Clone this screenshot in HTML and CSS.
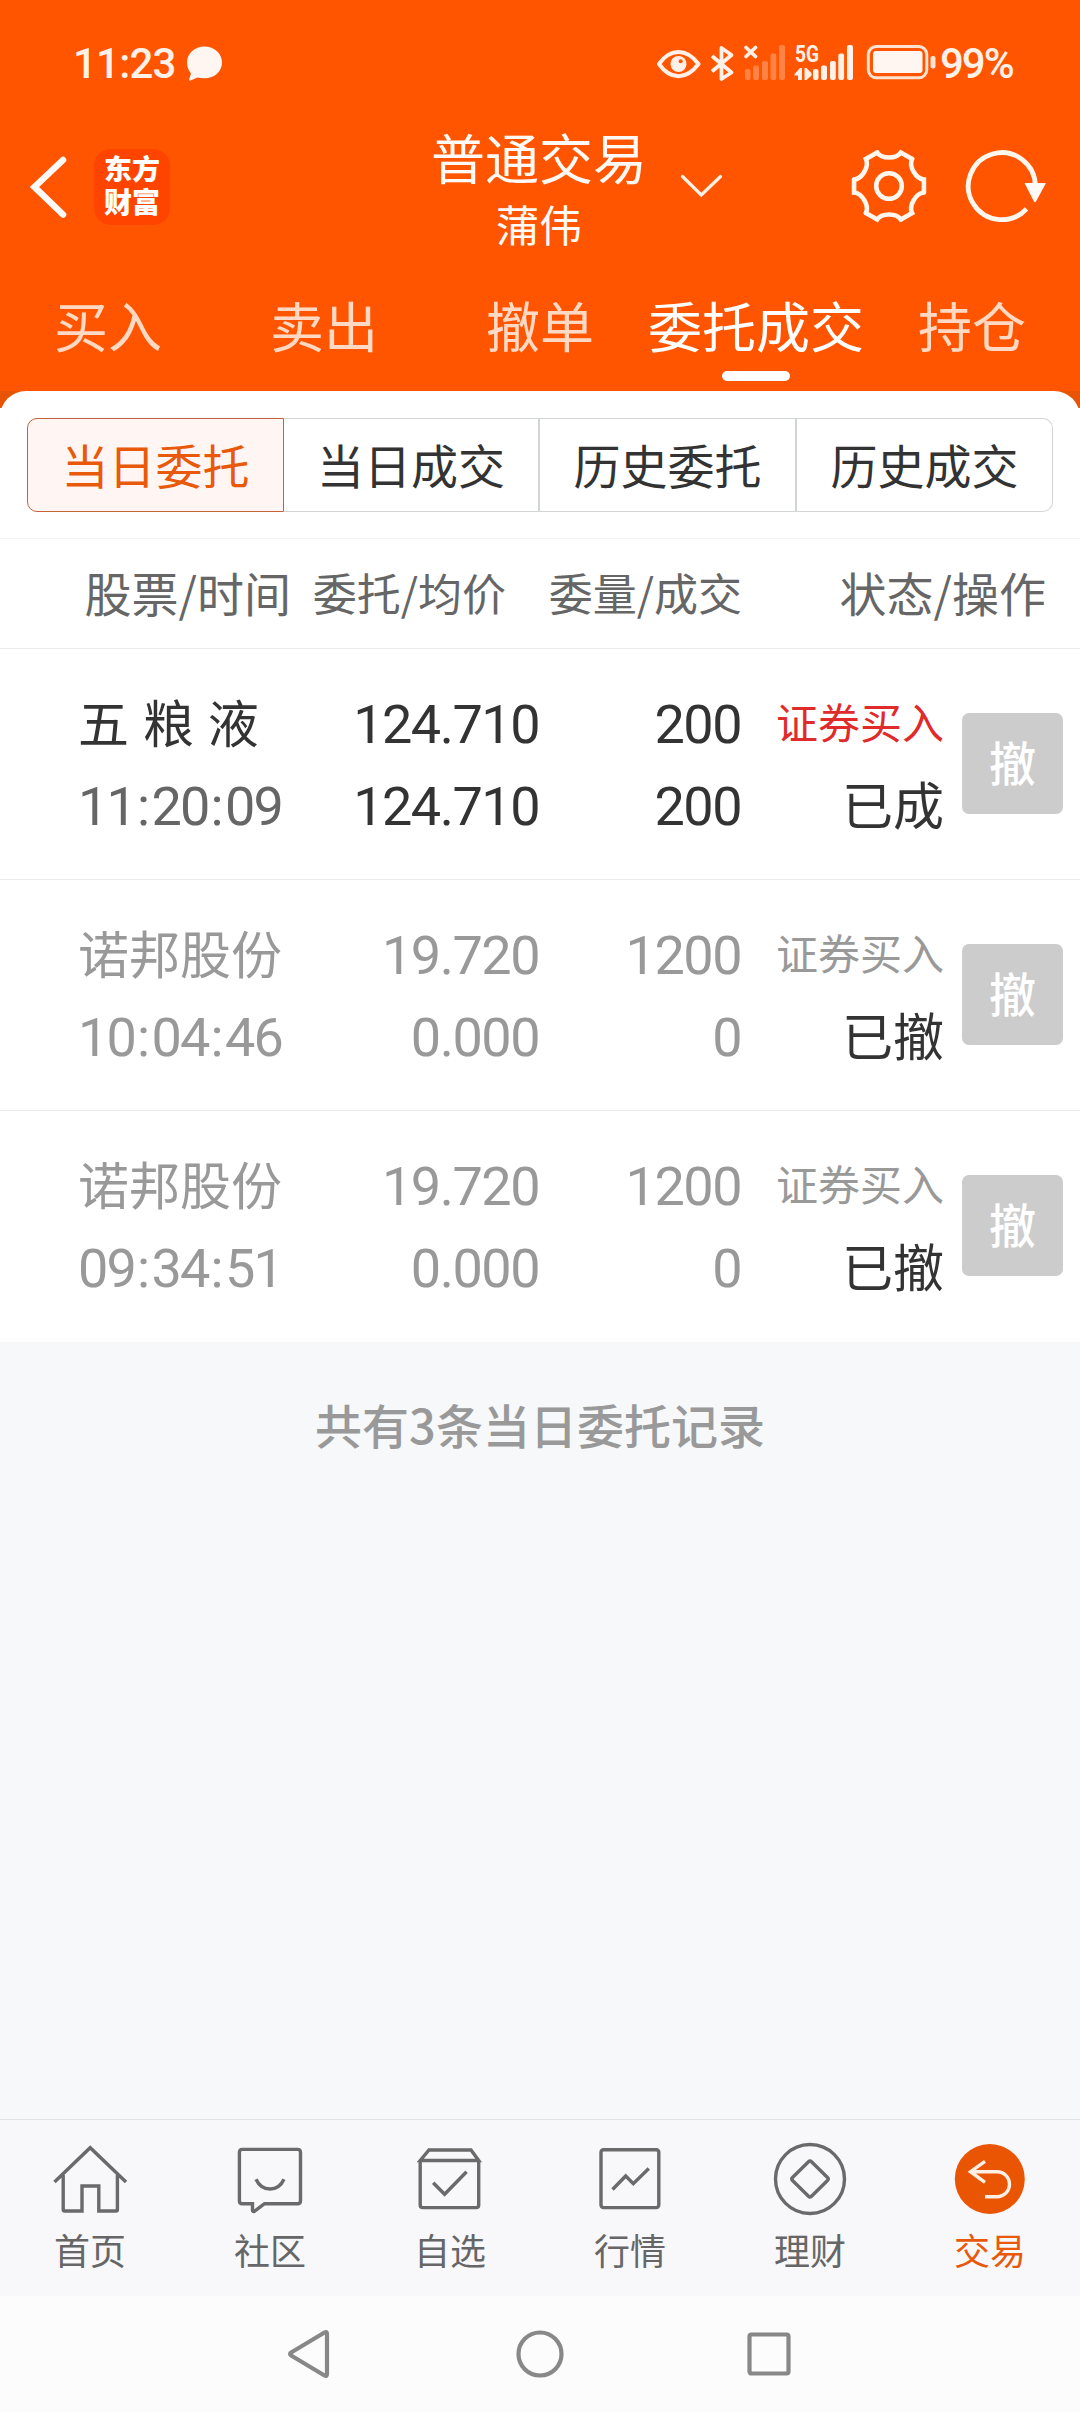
FILE: index.html
```html
<!DOCTYPE html>
<html lang="zh-CN">
<head>
<meta charset="utf-8">
<title>普通交易</title>
<link rel="stylesheet" href="styles.css">
</head>
<body>
<div class="app">
  <header class="header">
    <div class="status">
      <span class="clock">11:23</span>
      <svg class="bubble" width="36" height="44" viewBox="187 40 36 44"><path d="M204.500 46.500C214.500 46.500 222 53.500 222 62.500S214.500 78.300 204.500 78.300C201.500 78.300 199.500 77.800 197.500 77.500L190.500 80.600C189 80.800 188.800 80 189.200 79L191 73.500C188.500 70.500 187 66.500 187 62.500C187 53.500 194.500 46.500 204.500 46.500Z" fill="#fff6f2"/></svg>
      <svg class="s-eye" width="44" height="44" viewBox="657 40 44 44"><path d="M659 64C664.500 56 671 52 678.500 52S692.500 56 698.500 64C692.500 72 686 76.200 678.500 76.200S664.500 72 659 64Z" fill="none" stroke="#fff0e8" stroke-width="4" stroke-linejoin="round"/><circle cx="678.500" cy="64" r="8" fill="#fff0e8"/><circle cx="680.700" cy="61.300" r="2" fill="#f50"/></svg>
      <svg class="s-bt" width="26" height="44" viewBox="709 40 26 44"><path d="M712 56L731.500 72.500L721.500 79V48L731.500 55L712 71.500" fill="none" stroke="#fff0e8" stroke-width="3.800" stroke-linejoin="round"/></svg>
      <svg class="s-sim" width="42" height="44" viewBox="744 40 42 44"><path d="M746 47.500L755.500 56.500M755.500 47.500L746 56.500" stroke="#fff0e8" stroke-width="3.600" stroke-linecap="round"/><g fill="#ff8345"><rect x="745" y="69" width="5.500" height="11" rx="2"/><rect x="753" y="65.500" width="6" height="14.500" rx="2"/><rect x="762" y="61" width="6" height="19" rx="2"/><rect x="770.500" y="53.500" width="5.800" height="26.500" rx="2"/><rect x="779" y="45" width="6" height="35" rx="2"/></g></svg>
      <svg class="s-net" width="60" height="44" viewBox="794 40 60 44"><text class="net-label" x="795" y="62" textLength="24" lengthAdjust="spacingAndGlyphs">5G</text><g fill="#fff0e8"><path d="M794.500 74L800 68H802V80H798V75.500H794.500ZM804.500 68H806.500L811.500 73V75.500L806.500 80H804.500Z"/><rect x="813" y="69" width="5.500" height="11" rx="2"/><rect x="821" y="65.500" width="6" height="14.500" rx="2"/><rect x="830" y="61" width="5.800" height="19" rx="2"/><rect x="838.300" y="53.500" width="5.800" height="26.500" rx="2"/><rect x="847" y="45" width="6" height="35" rx="2"/></g></svg>
      <svg class="s-bat" width="70" height="44" viewBox="866 40 70 44"><rect x="868.300" y="46.500" width="58.500" height="31.300" rx="8" fill="none" stroke="#ffe2d0" stroke-width="3"/><rect x="873" y="51" width="49.500" height="22" rx="3" fill="#fff6f2"/><rect x="930.500" y="56" width="5" height="12.500" rx="2" fill="#ffe2d0"/></svg>
      <span class="percent">99%</span>
    </div>
    <div class="titlebar">
      <svg class="back" width="40" height="76" viewBox="28 149 40 76"><path d="M63 160L34.500 187L63 214.500" fill="none" stroke="#fffaf7" stroke-width="6.500" stroke-linecap="round"/></svg>
      <div class="logo">东方<br>财富</div>
      <div class="title"><div class="title-main">普通交易</div><div class="title-sub">蒲伟</div></div>
      <svg class="chevron" width="44" height="30" viewBox="680 171 44 30"><path d="M682.500 176.500L701.300 195L720.500 176.500" fill="none" stroke="#fff0e4" stroke-width="3.200" stroke-linecap="round"/></svg>
      <svg class="gear" width="80" height="80" viewBox="-40 -40 80 80"><defs><path id="cog" d="M-11.850 -33.500C-7.500 -26.800 7.500 -26.800 11.850 -33.500L23.100 -27"/></defs><g fill="none" stroke="#fff6ee" stroke-width="4.600" stroke-linecap="round"><use href="#cog"/><use href="#cog" transform="rotate(60)"/><use href="#cog" transform="rotate(120)"/><use href="#cog" transform="rotate(180)"/><use href="#cog" transform="rotate(240)"/><use href="#cog" transform="rotate(300)"/><circle r="12.800"/></g></svg>
      <svg class="refresh" width="84" height="80" viewBox="964 146 84 80"><path d="M1026.500 208.800A33.500 33.500 0 1 1 1035.300 186" fill="none" stroke="#fff6ee" stroke-width="4.800"/><path d="M1024.500 183H1046L1036 201.500Q1035 203 1034 201.500Z" fill="#fffaf7"/></svg>
    </div>
    <nav class="tabs">
      <span class="tab">买入</span><span class="tab">卖出</span><span class="tab">撤单</span><span class="tab tab-on">委托成交</span><span class="tab">持仓</span>
    </nav>
  </header>
  <div class="lip"><div class="lip-card"></div></div>
  <main class="main">
    <div class="segments">
      <span class="seg seg-on">当日委托</span><span class="seg">当日成交</span><span class="seg">历史委托</span><span class="seg">历史成交</span>
    </div>
    <div class="thead">
      <span class="th-wide">股票/时间</span><span>委托/均价</span><span>委量/成交</span><span class="th-wide">状态/操作</span>
    </div>
    <div class="row">
      <div class="who"><div class="name">五 粮 液</div><div class="time">11<i>:</i>20<i>:</i>09</div></div>
      <div class="num"><div>124.710</div><div>124.710</div></div>
      <div class="num"><div>200</div><div>200</div></div>
      <div class="state"><div class="side">证券买入</div><div class="result">已成</div></div>
      <div class="cancel">撤</div>
    </div>
    <div class="row row-off">
      <div class="who"><div class="name">诺邦股份</div><div class="time">10<i>:</i>04<i>:</i>46</div></div>
      <div class="num"><div>19.720</div><div>0.000</div></div>
      <div class="num"><div>1200</div><div>0</div></div>
      <div class="state"><div class="side">证券买入</div><div class="result">已撤</div></div>
      <div class="cancel">撤</div>
    </div>
    <div class="row row-off">
      <div class="who"><div class="name">诺邦股份</div><div class="time">09<i>:</i>34<i>:</i>51</div></div>
      <div class="num"><div>19.720</div><div>0.000</div></div>
      <div class="num"><div>1200</div><div>0</div></div>
      <div class="state"><div class="side">证券买入</div><div class="result">已撤</div></div>
      <div class="cancel">撤</div>
    </div>
  </main>
  <section class="summary">共有3条当日委托记录</section>
  <nav class="tabbar">
    <div class="item"><svg class="ico" viewBox="0 0 80 80"><path d="M4.500 42L40.200 7.700L76 42M13.200 35V69.500Q13.200 71 14.700 71H32V46H48.800V71H66Q67.400 71 67.400 69.500V35"/></svg><span>首页</span></div>
    <div class="item"><svg class="ico" viewBox="0 0 80 80"><path d="M12.300 9.400H67.600Q70.500 9.400 70.500 12.400V60.700Q70.500 63.700 67.600 63.700H34.500L24.500 71.300Q22.500 72 22.500 70V63.700H12.300Q9.400 63.700 9.400 60.700V12.400Q9.400 9.400 12.300 9.400ZM26 39.300C32 52.300 48 52.300 54 39.300"/></svg><span>社区</span></div>
    <div class="item"><svg class="ico" viewBox="0 0 80 80"><path d="M10.200 20.500L19 10H61L68.700 20.500ZM10.200 20.500V65Q10.200 67.600 13 67.600H66Q68.700 67.600 68.700 65V20.500M23.200 42.700L34.600 54.300L56.600 31.700"/></svg><span>自选</span></div>
    <div class="item"><svg class="ico" viewBox="0 0 80 80"><rect x="11" y="9.800" width="57.800" height="57.800" rx="2.500"/><path d="M22.500 49.500L35.700 36L43.300 43.700L58.800 28.500"/></svg><span>行情</span></div>
    <div class="item"><svg class="ico" viewBox="0 0 80 80"><circle cx="40" cy="39" r="34.500"/><path d="M38.500 21.700Q40 20.200 41.500 21.700L57.500 37.500Q59 39 57.500 40.500L41.500 56.300Q40 57.800 38.500 56.300L22.500 40.500Q21 39 22.500 37.500Z"/></svg><span>理财</span></div>
    <div class="item item-on"><svg class="ico" viewBox="0 0 80 80"><circle class="disc" cx="39.800" cy="39" r="35"/><path d="M35 21.300L20.500 31.700L35 42.300M20.500 31.700H47A12.500 12.500 0 0 1 47 56.700H35"/></svg><span>交易</span></div>
  </nav>
  <nav class="sysbar">
    <svg class="sys" viewBox="0 0 60 60"><path d="M39.500 8.500Q42 7 42 10V50Q42 53 39.500 51.500L7 32Q3 30 7 28Z" transform="translate(5 0)"/></svg>
    <svg class="sys" viewBox="0 0 60 60"><circle cx="30" cy="30" r="21.500"/></svg>
    <svg class="sys" viewBox="0 0 60 60"><rect x="9.500" y="10.500" width="39" height="39" rx="2"/></svg>
  </nav>
</div>
</body>
</html>
```
FILE: styles.css
```css
* { box-sizing: border-box; }
body { margin: 0; background: #f7f8fa; font-family: "Noto Sans CJK SC", sans-serif; color: #333; }
.app { width: 1080px; height: 2412px; display: flex; flex-direction: column; overflow: hidden; white-space: nowrap; }
svg { display: block; flex: none; }

.header { height: 391px; background: #ff5500; display: flex; flex-direction: column; }
.status { height: 84px; padding: 40px 0 0 73px; display: flex; }
.clock, .percent { font: 500 42px/48px Roboto, sans-serif; color: #fff0e8; }
.clock { width: 114px; letter-spacing: -0.8px; }
.s-eye { margin-left: 434px; }
.s-bt { margin-left: 8px; }
.s-sim { margin-left: 9px; }
.s-net { margin-left: 8px; }
.s-bat { margin-left: 12px; }
.percent { margin-left: 4px; letter-spacing: -2px; }
.net-label { font: 700 23px Roboto, sans-serif; fill: #fff0e8; }

.titlebar { height: 186px; padding-left: 28px; display: flex; align-items: flex-start; }
.back { margin-top: 65px; }
.logo { width: 76px; height: 76px; margin: 65px 0 0 26px; border-radius: 17px; background: #ff4400; color: #fff; font-size: 28px; font-weight: 900; line-height: 33px; text-align: center; padding-top: 3px; }
.title { margin: 40px 0 0 261px; width: 216px; color: #fffaf5; text-align: center; }
.title-main { font-size: 54px; line-height: 66px; }
.title-sub { font-size: 43px; line-height: 66px; }
.chevron { margin: 87px 0 0 33px; }
.gear { margin: 62px 0 0 125px; }
.refresh { margin: 62px 0 0 35px; }

.tabs { height: 121px; display: grid; grid-template-columns: repeat(5, 216px); }
.tab { display: flex; flex-direction: column; align-items: center; padding-top: 15px; font-size: 54px; line-height: 80px; color: #ffd9c4; }
.tab-on { color: #fff; }
.tab-on::after { content: ""; width: 68px; height: 10px; margin-top: 6px; border-radius: 5px; background: #fff; }

.lip { height: 17px; overflow: hidden; background: #e85405; }
.lip-card { height: 60px; border-radius: 26px; background: #fff; }
.main { background: #fff; }
.segments { height: 131px; padding: 10px 27px 26px; display: grid; grid-template-columns: 257px 256px 257px 256px; border-bottom: 1px solid #f5f5f5; }
.seg { display: flex; align-items: center; justify-content: center; font-size: 47px; line-height: 60px; padding-bottom: 2px; border: 1px solid #d2d5d6; border-left: 0; border-right-width: 2px; }
.seg:last-child { border-right-width: 1px; border-radius: 0 10px 10px 0; }
.seg-on { color: #e8590c; background: #fff6f3; border: 1px solid #c4633a; border-radius: 10px 0 0 10px; }

.thead { height: 110px; padding-bottom: 4px; display: grid; grid-template-columns: 291px 215px 236px 304px; align-items: center; justify-items: end; font-size: 44px; line-height: 60px; color: #666; border-bottom: 1px solid #ebebeb; }
.th-wide { font-size: 47px; }

.row { height: 231px; display: grid; grid-template-columns: 309px 230px 202px 203px 119px; border-bottom: 1px solid #ebebeb; line-height: 82px; }
.row:last-child { border-bottom: 0; }
.who { padding: 31px 0 0 78px; }
.name { font-size: 51px; word-spacing: 2.500px; }
.time, .num { font-family: Roboto, sans-serif; font-size: 54px; letter-spacing: -1.500px; }
.time { color: #666; margin-top: 4px; letter-spacing: -1.900px; }
.time i { font-style: normal; letter-spacing: 1.500px; margin-left: 2px; }
.num { padding-top: 35px; text-align: right; }
.state { padding-top: 31px; text-align: right; }
.side { font-size: 42px; color: #df2b2b; }
.result { font-size: 51px; color: #333; }
.cancel { width: 101px; height: 101px; margin: 64px 0 0 18px; border-radius: 7px; background: #ccc; color: #fff; font-size: 47px; font-weight: 500; line-height: 96px; text-align: center; }
.row-off, .row-off .time, .row-off .side { color: #999; }

.summary { flex: 1; padding-top: 51px; text-align: center; font-size: 47px; line-height: 62px; font-weight: 500; color: #999; }

.tabbar { height: 177px; padding-top: 20px; display: grid; grid-template-columns: repeat(6, 180px); background: #f8f8fb; border-top: 1px solid #e0e2e5; }
.item { display: flex; flex-direction: column; align-items: center; font-size: 36px; line-height: 50px; color: #666; }
.item span { margin-top: 4px; }
.ico { width: 80px; height: 80px; fill: none; stroke: #6a6a6a; stroke-width: 3.400; }
.item-on { color: #e8590c; }
.item-on .ico { stroke: #fff0e6; }
.item-on .disc { fill: #ea5504; stroke: none; }

.sysbar { height: 116px; padding: 28px 195px 0; display: grid; grid-template-columns: repeat(3, 230px); justify-items: center; background: #fcfcfc; }
.sys { width: 60px; height: 60px; fill: none; stroke: #888; stroke-width: 4.200; }
```
